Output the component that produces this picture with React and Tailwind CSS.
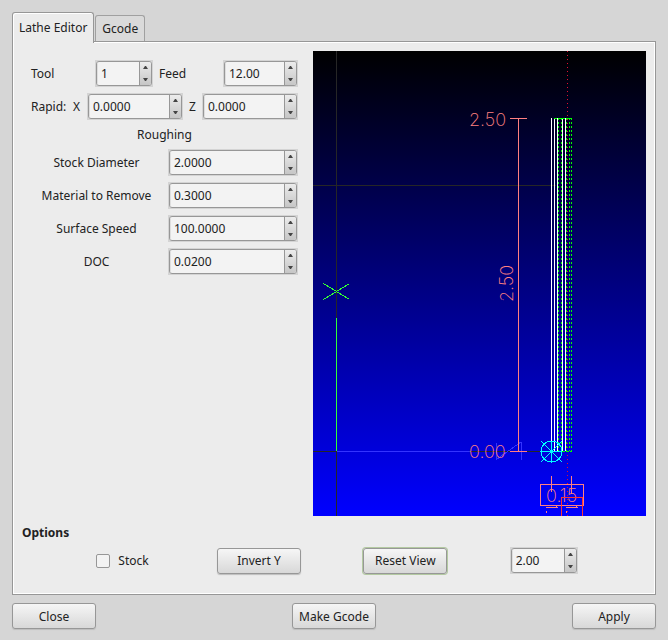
import React, { useState } from 'react'
import clsx from 'clsx'

const ROUGHING = [
    { id: 'stock-diameter', label: 'Stock Diameter', value: 2, digits: 4, step: 0.1 },
    { id: 'material', label: 'Material to Remove', value: 0.3, digits: 4, step: 0.01 },
    { id: 'surface-speed', label: 'Surface Speed', value: 100, digits: 4, step: 1 },
    { id: 'doc', label: 'DOC', value: 0.02, digits: 4, step: 0.001 },
]

// x positions of the feed passes and the rapid moves
const CUTS = [238.5, 241.5, 244.5, 249.5, 252.5]
const RAPIDS = [245.5, 248.5, 253.5, 256.5, 258.5]

function SpinBox({ id, label, value, digits = 4, step = 1, className }) {
    const [text, setText] = useState(value.toFixed(digits))

    const bump = (delta) => {
        const next = (parseFloat(text) || 0) + delta
        setText(Math.max(0, next).toFixed(digits))
    }

    return (
        <div className={clsx('h-[27px] bg-[#d4d4d4] p-px', className)}>
            <div className="flex h-full overflow-hidden rounded-[3px] border border-[#979797] bg-[#f3f3f3]">
                <input
                    id={id}
                    type="text"
                    inputMode="decimal"
                    aria-label={label}
                    value={text}
                    onChange={(e) => setText(e.target.value)}
                    className="w-0 min-w-0 flex-1 border-l border-[#dedede] pl-[3px] outline-none"
                />
                <div className="flex w-3 flex-col border-l border-[#979797] bg-linear-to-b from-[#ececec] to-[#c6c6c6]">
                    <button type="button" aria-label="Increase" className="flex flex-1 items-center justify-center" onClick={() => bump(step)}>
                        <svg width="5" height="3" viewBox="0 0 5 3" fill="#444"><path d="M2 0h1L5 3H0z" /></svg>
                    </button>
                    <button type="button" aria-label="Decrease" className="flex flex-1 items-center justify-center" onClick={() => bump(-step)}>
                        <svg width="5" height="3" viewBox="0 0 5 3" fill="#444"><path d="M2 3h1L5 0H0z" /></svg>
                    </button>
                </div>
            </div>
        </div>
    )
}

function PushButton({ children, focused, ...props }) {
    return (
        <button
            type="button"
            className={clsx(
                'h-[26px] w-[84px] rounded-[3px] border border-[#979797] bg-linear-to-b from-[#f6f6f6] to-[#d8d8d8] whitespace-nowrap',
                focused ? 'shadow-[0_0_0_1px_#b3c9a1]' : 'shadow-[0_1px_1px_#bdbdbd]'
            )}
            {...props}
        >
            {children}
        </button>
    )
}

function Backplot() {
    return (
        <svg
            className="h-[465px] min-w-0 flex-1"
            viewBox="0 0 333 465"
            preserveAspectRatio="xMidYMid slice"
            shapeRendering="crispEdges"
            fill="none"
            role="img"
            aria-label="Backplot"
        >
            <defs>
                <linearGradient id="sky" x1="0" y1="0" x2="0" y2="1">
                    <stop offset="0" stopColor="#000000" />
                    <stop offset="1" stopColor="#0000ff" />
                </linearGradient>
            </defs>
            <rect width="333" height="465" fill="url(#sky)" />

            {/* grid */}
            <path stroke="#262626" d="M23.5 0V465M0 134.5H243M0 400.5H23M158 400.5H228" />
            <path stroke="#3333ff" d="M24 400.5H158M183.5 392V409M208.5 391V409M184 408L208 391" />
            <path stroke="#33ff33" d="M23.5 267V400M10.5 232.5L36.5 248.5M10.5 248.5L36.5 232.5" />

            {/* height dimension */}
            <path stroke="#ff8080" d="M205.5 67V400M197 67.5H214M197 400.5H214" />
            <g fill="#ff8080" className="font-[Inter] text-[18px] font-extralight">
                <text x="156" y="75">2.50</text>
                <text x="156" y="407">0.00</text>
                <text transform="translate(200 251) rotate(-90)">2.50</text>
                <text x="233" y="451">0.15</text>
            </g>

            {/* toolpath */}
            <path stroke="#e01030" strokeDasharray="1 3" d="M254.5 0V465" />
            {RAPIDS.map((x) => (
                <path key={x} stroke="#00ff00" strokeDasharray="2 2" d={`M${x} 67V400`} />
            ))}
            {CUTS.map((x) => (
                <path key={x} stroke="#ffffff" d={`M${x} 67V400`} />
            ))}
            <path stroke="#00ff00" strokeDasharray="3 1" d="M241 67.5H259M241 400.5H259" />

            {/* tool */}
            <g stroke="#00ffff">
                <circle cx="238.5" cy="400.5" r="10.5" />
                <path d="M228 400.5H249M238.5 390V411M228 390L249 411M228 411L249 390" />
            </g>

            {/* width dimension */}
            <path stroke="#ff8080" d="M227.5 433.5H270.5V454.5H227.5zM238.5 425V441M258.5 425V443M233 456.5H245M243.5 455V457M253 456.5H265M263.5 455V457M233.5 460V462M253.5 460V462" />
            <path stroke="#ff3333" d="M248.5 465V446.5H269.5V465" />
        </svg>
    )
}

export default function App() {
    const [stock, setStock] = useState(false)
    const [tab, setTab] = useState('editor')

    return (
        <main className="min-h-screen bg-[#d6d6d6] px-3 pt-3 pb-[11px] font-['Noto_Sans',sans-serif] text-[12px] leading-[17px] text-[#222]">
            <div role="tablist" className="flex items-end gap-px">
                <button
                    type="button"
                    role="tab"
                    aria-selected={tab === 'editor'}
                    onClick={() => setTab('editor')}
                    className="relative z-10 -mb-0.5 h-[31px] rounded-t-[3px] border border-b-0 border-[#979797] bg-[#ececec] px-1.5 pb-0.5 shadow-[inset_1px_1px_0_#fff]"
                >
                    Lathe Editor
                </button>
                <button
                    type="button"
                    role="tab"
                    aria-selected={tab === 'gcode'}
                    onClick={() => setTab('gcode')}
                    className="h-[26px] rounded-t-[3px] border border-b-0 border-[#a0a0a0] bg-[#dadada] px-1.5"
                >
                    Gcode
                </button>
            </div>

            <section className="border border-[#979797] bg-[#ececec] pt-[9px] pr-[9px] pb-5 pl-[9px] shadow-[inset_0_0_0_1px_#fff]">
                <div className="flex gap-[15px] pl-[9px]">
                    <div className="flex w-[267px] shrink-0 flex-col gap-1.5 pt-[9px]">
                        <div className="flex items-center">
                            <label htmlFor="tool" className="w-16">Tool</label>
                            <SpinBox id="tool" value={1} digits={0} className="w-[58px]" />
                            <label htmlFor="feed" className="flex-1 pl-1.5">Feed</label>
                            <SpinBox id="feed" value={12} digits={2} className="w-[75px]" />
                        </div>
                        <div className="flex items-center">
                            <span className="w-[42px]">Rapid:</span>
                            <label htmlFor="rapid-x" className="w-3.5">X</label>
                            <SpinBox id="rapid-x" value={0} step={0.1} className="w-24" />
                            <label htmlFor="rapid-z" className="flex-1 text-center">Z</label>
                            <SpinBox id="rapid-z" value={0} step={0.1} className="w-24" />
                        </div>
                        <h2 className="text-center">Roughing</h2>
                        {ROUGHING.map(({ label, ...field }) => (
                            <div key={field.id} className="flex items-center gap-1.5">
                                <label htmlFor={field.id} className="flex-1 text-center">{label}</label>
                                <SpinBox {...field} className="w-[130px]" />
                            </div>
                        ))}
                    </div>
                    <Backplot />
                </div>

                <h2 className="mt-2 font-bold">Options</h2>
                <div className="mt-1.5 flex items-center justify-evenly pr-1.5 pl-3">
                    <label className="flex items-center gap-2 pr-1.5">
                        <input
                            type="checkbox"
                            checked={stock}
                            onChange={(e) => setStock(e.target.checked)}
                            className="size-3.5 appearance-none rounded-[2px] border border-[#979797] bg-[#f3f3f3] checked:bg-[#86ab63]"
                        />
                        Stock
                    </label>
                    <PushButton>Invert Y</PushButton>
                    <PushButton focused>Reset View</PushButton>
                    <SpinBox id="scale" label="Scale" value={2} digits={2} className="w-[68px]" />
                </div>
            </section>

            <footer className="mt-2 flex justify-between">
                <PushButton>Close</PushButton>
                <PushButton>Make Gcode</PushButton>
                <PushButton>Apply</PushButton>
            </footer>
        </main>
    )
}
